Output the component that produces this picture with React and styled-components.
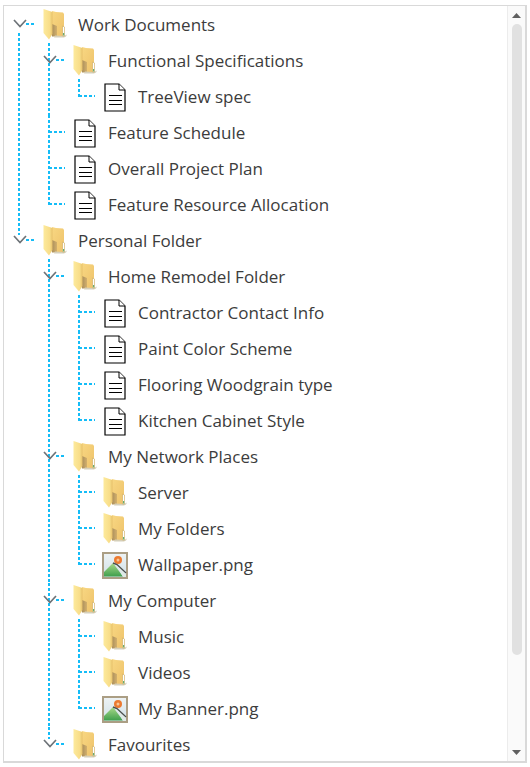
import React from "react";
import styled, { createGlobalStyle } from "styled-components";

const GlobalStyle = createGlobalStyle`
  html, body {
    margin: 0;
    padding: 0;
    background: #fff;
  }
`;

const lineColor = "#14bcf7";

const Panel = styled.div`
  display: flex;
  width: 524px;
  height: 758px;
  margin: 5px 0 0 3px;
  box-sizing: border-box;
  border: 1px solid #d9d9d9;
  border-width: 1px 2px 2px 1px;
  overflow: hidden;
  font-family: "Open Sans", "Noto Sans", sans-serif;
`;

const TreeArea = styled.div`
  flex: 1;
  padding-top: 1px;
  overflow: hidden;
`;

const NodeList = styled.ul`
  list-style: none;
  margin: 0;
  padding: 0 0 0 ${(props) => (props.$root ? 0 : 30)}px;
`;

const Node = styled.li`
  position: relative;

  &::before {
    content: "";
    position: absolute;
    left: 14px;
    top: ${(props) => (props.$first ? 26 : 0)}px;
    bottom: ${(props) => (props.$last ? "auto" : 0)};
    height: ${(props) => (props.$last ? (props.$toggle ? "12px" : "18px") : "auto")};
    width: 2px;
    background: linear-gradient(to bottom, ${lineColor} 0 3px, transparent 3px);
    background-size: 2px 5px;
  }
`;

const Row = styled.div`
  position: relative;
  display: flex;
  align-items: center;
  height: 36px;

  &::before {
    content: "";
    position: absolute;
    left: ${(props) => (props.$toggle ? 22 : 15)}px;
    top: 16px;
    width: ${(props) => (props.$toggle ? 9 : 16)}px;
    height: 2px;
    background: linear-gradient(to right, ${lineColor} 0 3px, transparent 3px);
    background-size: 5px 2px;
  }
`;

const Toggle = styled.span`
  position: relative;
  display: block;
  flex: none;
  width: 30px;
  height: 36px;
`;

const Chevron = styled.svg`
  position: absolute;
  left: 9px;
  top: 12px;
`;

const IconSlot = styled.span`
  display: flex;
  flex: none;
  align-items: center;
  justify-content: center;
  width: 42px;
  height: 36px;
  margin-right: 2px;
`;

const FolderSvg = styled.svg`
  margin-top: -2px;
`;

const Label = styled.span`
  font-size: 17px;
  line-height: 36px;
  color: #3c3c3c;
  white-space: nowrap;
`;

const ScrollBar = styled.div`
  display: flex;
  flex: none;
  flex-direction: column;
  align-items: center;
  box-sizing: border-box;
  width: 18px;
  height: 100%;
  border-left: 1px solid #ececec;
  background: #fafafa;
`;

const ArrowButton = styled.div`
  flex: none;
  height: 18px;
  display: flex;
  align-items: center;
  justify-content: center;
`;

const Thumb = styled.div`
  flex: 1;
  width: 10px;
  margin-bottom: 88px;
  border-radius: 5px;
  background: #e1e1e1;
`;

const FolderIcon = () => (
  <FolderSvg width="24" height="31" viewBox="0 0 24 31">
    <defs>
      <linearGradient id="folderBack" x1="0" y1="0" x2="1" y2="1">
        <stop offset="0" stopColor="#f8d782" />
        <stop offset="1" stopColor="#eec26a" />
      </linearGradient>
      <linearGradient id="folderDoor" x1="0" y1="0" x2="1" y2="0">
        <stop offset="0" stopColor="#fdea9c" />
        <stop offset="0.7" stopColor="#f8dd88" />
        <stop offset="1" stopColor="#e6c06a" />
      </linearGradient>
      <linearGradient id="folderShade" x1="0" y1="0" x2="1" y2="0">
        <stop offset="0" stopColor="#a98e5c" />
        <stop offset="1" stopColor="#d3b06c" />
      </linearGradient>
    </defs>
    <path d="M9 2 L13 3 L20 3.5 L21 5 V27 H9 Z" fill="url(#folderBack)" />
    <path d="M9 15 L14 17 V27.5 H9 Z" fill="url(#folderShade)" />
    <path d="M12 26.5 L21 27 L24 25.5 L23 27.5 L21 28.5 L11 28.5 Z" fill="#d5cfba" />
    <path d="M19.5 17 L21.5 18 V27 L19.5 27 Z" fill="#fff" stroke="#cda95a" strokeWidth="0.6" />
    <path d="M20 24 h1.2 v2.5 h-1.2 z" fill="#66ad74" />
    <path d="M0.5 0 L9.5 3 V25 L6 30.5 L0.5 24 Z" fill="url(#folderDoor)" />
  </FolderSvg>
);

const DocumentIcon = () => (
  <svg width="22" height="29" viewBox="0 0 22 29">
    <path d="M1 1 H15 L21 7 V28 H1 Z" fill="#fff" stroke="#000" strokeWidth="1.2" />
    <path d="M15 1 V7 H21" fill="#fff" stroke="#000" strokeWidth="1" />
    <path d="M5 12.5 H18 M5 17.5 H18 M5 21.5 H18" stroke="#000" strokeWidth="1" />
  </svg>
);

const ImageIcon = () => (
  <svg width="26" height="27" viewBox="0 0 26 27">
    <defs>
      <linearGradient id="sky" x1="0" y1="0" x2="0" y2="1">
        <stop offset="0" stopColor="#eef3f5" />
        <stop offset="1" stopColor="#cfe0e6" />
      </linearGradient>
      <linearGradient id="hill" x1="0" y1="0" x2="0" y2="1">
        <stop offset="0" stopColor="#a9d98a" />
        <stop offset="1" stopColor="#3f9f4c" />
      </linearGradient>
    </defs>
    <rect x="1" y="1" width="24" height="25" fill="url(#sky)" stroke="#ab9e84" strokeWidth="2" />
    <circle cx="16" cy="8" r="4" fill="#ec7a30" />
    <circle cx="16" cy="8" r="1.5" fill="#f8c695" />
    <path d="M2 24.5 V20 L11 11 L21 24.5 Z" fill="url(#hill)" />
    <path d="M11 11 L15 12.5 L24 21" fill="none" stroke="#4b4f4c" strokeWidth="1.4" />
    <path d="M15 14 L24 22 V25 H21 Z" fill="#dfe9e6" />
  </svg>
);

const icons = { folder: FolderIcon, doc: DocumentIcon, image: ImageIcon };

const tree = [
  {
    label: "Work Documents",
    icon: "folder",
    children: [
      {
        label: "Functional Specifications",
        icon: "folder",
        children: [{ label: "TreeView spec", icon: "doc" }],
      },
      { label: "Feature Schedule", icon: "doc" },
      { label: "Overall Project Plan", icon: "doc" },
      { label: "Feature Resource Allocation", icon: "doc" },
    ],
  },
  {
    label: "Personal Folder",
    icon: "folder",
    children: [
      {
        label: "Home Remodel Folder",
        icon: "folder",
        children: [
          { label: "Contractor Contact Info", icon: "doc" },
          { label: "Paint Color Scheme", icon: "doc" },
          { label: "Flooring Woodgrain type", icon: "doc" },
          { label: "Kitchen Cabinet Style", icon: "doc" },
        ],
      },
      {
        label: "My Network Places",
        icon: "folder",
        children: [
          { label: "Server", icon: "folder" },
          { label: "My Folders", icon: "folder" },
          { label: "Wallpaper.png", icon: "image" },
        ],
      },
      {
        label: "My Computer",
        icon: "folder",
        children: [
          { label: "Music", icon: "folder" },
          { label: "Videos", icon: "folder" },
          { label: "My Banner.png", icon: "image" },
        ],
      },
      { label: "Favourites", icon: "folder", toggle: true },
    ],
  },
];

const TreeNode = ({ item, first, last }) => {
  const Icon = icons[item.icon];
  const hasToggle = Boolean(item.children || item.toggle);
  return (
    <Node $first={first} $last={last} $toggle={hasToggle}>
      <Row $toggle={hasToggle}>
        <Toggle>
          {hasToggle && (
            <Chevron width="14" height="9" viewBox="0 0 14 9">
              <path d="M1 1 L7 7.5 L13 1" fill="none" stroke="#6d7378" strokeWidth="1.7" />
            </Chevron>
          )}
        </Toggle>
        <IconSlot>
          <Icon />
        </IconSlot>
        <Label>{item.label}</Label>
      </Row>
      {item.children && <TreeList items={item.children} />}
    </Node>
  );
};

const TreeList = ({ items, root }) => (
  <NodeList $root={root}>
    {items.map((item, i) => (
      <TreeNode
        key={item.label}
        item={item}
        first={root && i === 0}
        last={i === items.length - 1}
      />
    ))}
  </NodeList>
);

const App = () => (
  <>
    <GlobalStyle />
    <Panel>
      <TreeArea>
        <TreeList items={tree} root />
      </TreeArea>
      <ScrollBar>
        <ArrowButton>
          <svg width="9" height="5" viewBox="0 0 9 5">
            <path d="M4.5 0 L9 5 H0 Z" fill="#606060" />
          </svg>
        </ArrowButton>
        <Thumb />
        <ArrowButton>
          <svg width="9" height="5" viewBox="0 0 9 5">
            <path d="M0 0 H9 L4.5 5 Z" fill="#606060" />
          </svg>
        </ArrowButton>
      </ScrollBar>
    </Panel>
  </>
);

export default App;
